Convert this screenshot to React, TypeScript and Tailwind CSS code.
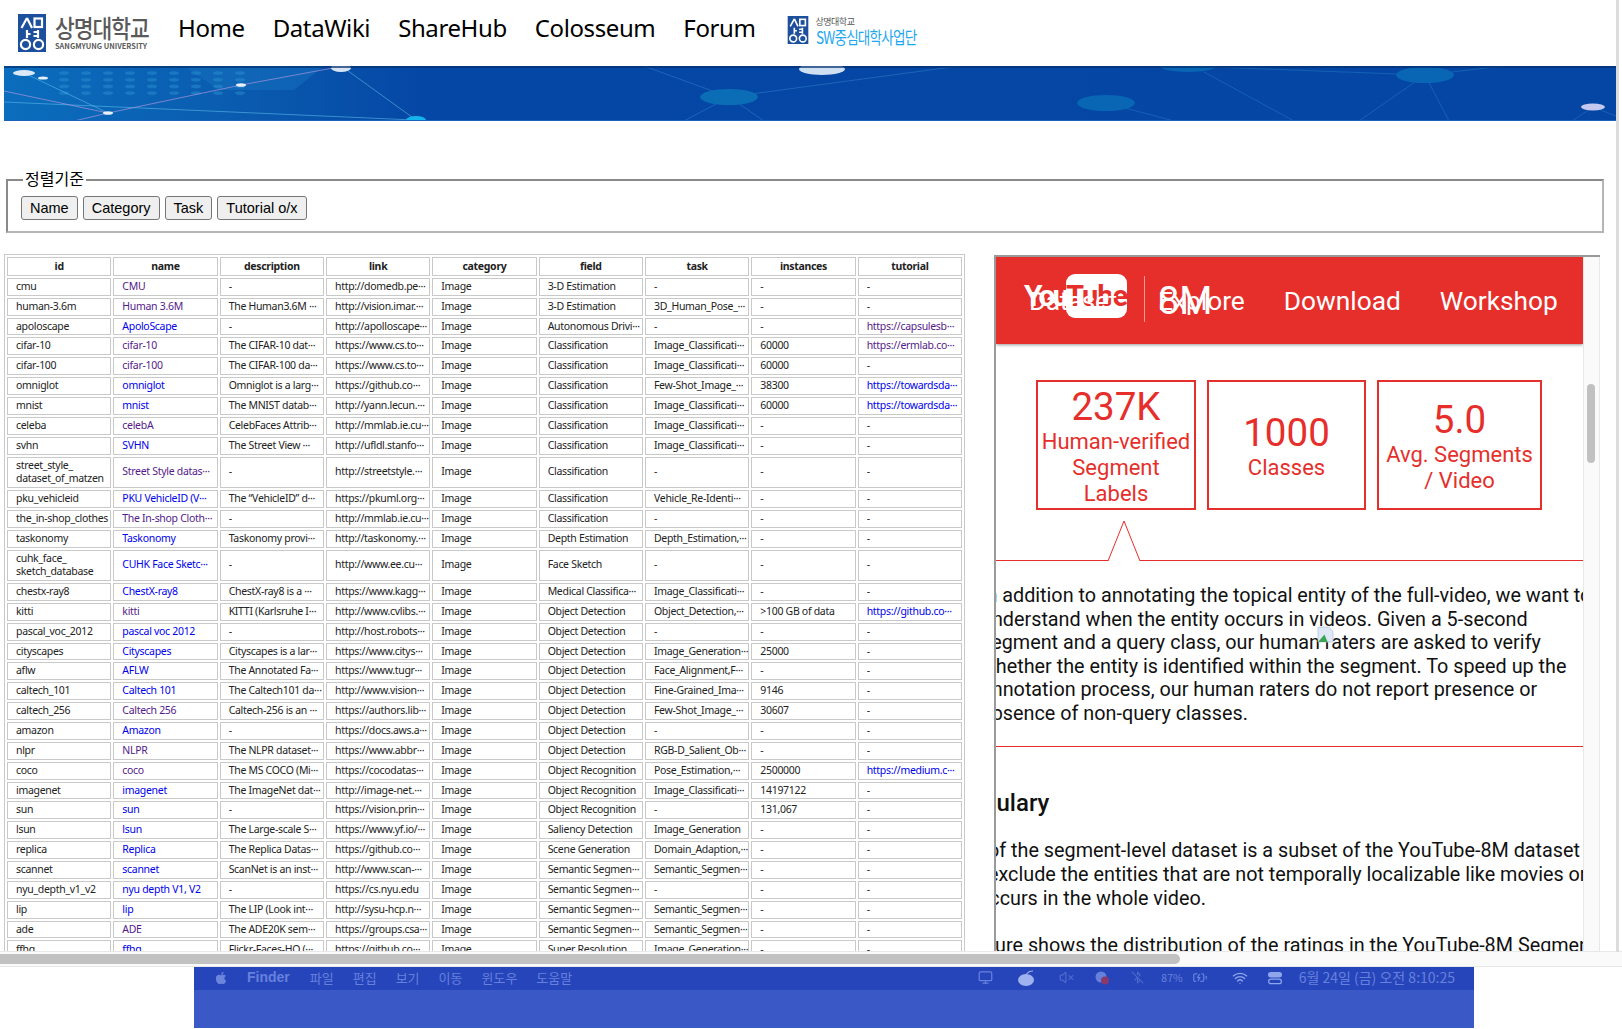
import React from 'react';
import { Monitor, VolumeX, BluetoothOff, Wifi, BatteryCharging } from 'lucide-react';
import { FaApple } from 'react-icons/fa';

// [id, name, visited, description, link, field, task, instances, tutorial, tutorial visited]
type Row = [string, string, boolean, string, string, string, string, string, string, boolean?];

const rows: Row[] = [
  ['cmu', 'CMU', true, '-', 'http://domedb.pe···', '3-D Estimation', '-', '-', '-'],
  ['human-3.6m', 'Human 3.6M', true, 'The Human3.6M ···', 'http://vision.imar.···', '3-D Estimation', '3D_Human_Pose_···', '-', '-'],
  ['apoloscape', 'ApoloScape', false, '-', 'http://apolloscape···', 'Autonomous Drivi···', '-', '-', 'https://capsulesb···', true],
  ['cifar-10', 'cifar-10', true, 'The CIFAR-10 dat···', 'https://www.cs.to···', 'Classification', 'Image_Classificati···', '60000', 'https://ermlab.co···', true],
  ['cifar-100', 'cifar-100', true, 'The CIFAR-100 da···', 'https://www.cs.to···', 'Classification', 'Image_Classificati···', '60000', '-'],
  ['omniglot', 'omniglot', false, 'Omniglot is a larg···', 'https://github.co···', 'Classification', 'Few-Shot_Image_···', '38300', 'https://towardsda···'],
  ['mnist', 'mnist', false, 'The MNIST datab···', 'http://yann.lecun.···', 'Classification', 'Image_Classificati···', '60000', 'https://towardsda···'],
  ['celeba', 'celebA', true, 'CelebFaces Attrib···', 'http://mmlab.ie.cu···', 'Classification', 'Image_Classificati···', '-', '-'],
  ['svhn', 'SVHN', false, 'The Street View ···', 'http://ufldl.stanfo···', 'Classification', 'Image_Classificati···', '-', '-'],
  ['street_style_\ndataset_of_matzen', 'Street Style datas···', true, '-', 'http://streetstyle.···', 'Classification', '-', '-', '-'],
  ['pku_vehicleid', 'PKU VehicleID (V···', false, 'The “VehicleID” d···', 'https://pkuml.org···', 'Classification', 'Vehicle_Re-Identi···', '-', '-'],
  ['the_in-shop_clothes', 'The In-shop Cloth···', true, '-', 'http://mmlab.ie.cu···', 'Classification', '-', '-', '-'],
  ['taskonomy', 'Taskonomy', false, 'Taskonomy provi···', 'http://taskonomy.···', 'Depth Estimation', 'Depth_Estimation,···', '-', '-'],
  ['cuhk_face_\nsketch_database', 'CUHK Face Sketc···', false, '-', 'http://www.ee.cu···', 'Face Sketch', '-', '-', '-'],
  ['chestx-ray8', 'ChestX-ray8', false, 'ChestX-ray8 is a ···', 'https://www.kagg···', 'Medical Classifica···', 'Image_Classificati···', '-', '-'],
  ['kitti', 'kitti', true, 'KITTI (Karlsruhe I···', 'http://www.cvlibs.···', 'Object Detection', 'Object_Detection,···', '>100 GB of data', 'https://github.co···'],
  ['pascal_voc_2012', 'pascal voc 2012', false, '-', 'http://host.robots···', 'Object Detection', '-', '-', '-'],
  ['cityscapes', 'Cityscapes', false, 'Cityscapes is a lar···', 'https://www.citys···', 'Object Detection', 'Image_Generation···', '25000', '-'],
  ['aflw', 'AFLW', false, 'The Annotated Fa···', 'https://www.tugr···', 'Object Detection', 'Face_Alignment,F···', '-', '-'],
  ['caltech_101', 'Caltech 101', false, 'The Caltech101 da···', 'http://www.vision···', 'Object Detection', 'Fine-Grained_Ima···', '9146', '-'],
  ['caltech_256', 'Caltech 256', true, 'Caltech-256 is an ···', 'https://authors.lib···', 'Object Detection', 'Few-Shot_Image_···', '30607', '-'],
  ['amazon', 'Amazon', false, '-', 'https://docs.aws.a···', 'Object Detection', '-', '-', '-'],
  ['nlpr', 'NLPR', true, 'The NLPR dataset···', 'https://www.abbr···', 'Object Detection', 'RGB-D_Salient_Ob···', '-', '-'],
  ['coco', 'coco', true, 'The MS COCO (Mi···', 'https://cocodatas···', 'Object Recognition', 'Pose_Estimation,···', '2500000', 'https://medium.c···'],
  ['imagenet', 'imagenet', false, 'The ImageNet dat···', 'http://image-net.···', 'Object Recognition', 'Image_Classificati···', '14197122', '-'],
  ['sun', 'sun', false, '-', 'https://vision.prin···', 'Object Recognition', '-', '131,067', '-'],
  ['lsun', 'lsun', false, 'The Large-scale S···', 'https://www.yf.io/···', 'Saliency Detection', 'Image_Generation', '-', '-'],
  ['replica', 'Replica', false, 'The Replica Datas···', 'https://github.co···', 'Scene Generation', 'Domain_Adaption,···', '-', '-'],
  ['scannet', 'scannet', false, 'ScanNet is an inst···', 'http://www.scan-···', 'Semantic Segmen···', 'Semantic_Segmen···', '-', '-'],
  ['nyu_depth_v1_v2', 'nyu depth V1, V2', false, '-', 'https://cs.nyu.edu', 'Semantic Segmen···', '-', '-', '-'],
  ['lip', 'lip', false, 'The LIP (Look int···', 'http://sysu-hcp.n···', 'Semantic Segmen···', 'Semantic_Segmen···', '-', '-'],
  ['ade', 'ADE', true, 'The ADE20K sem···', 'https://groups.csa···', 'Semantic Segmen···', 'Semantic_Segmen···', '-', '-'],
  ['ffhq', 'ffhq', false, 'Flickr-Faces-HQ (···', 'https://github.co···', 'Super Resolution', 'Image_Generation···', '-', '-'],
];

const headers = ['id', 'name', 'description', 'link', 'category', 'field', 'task', 'instances', 'tutorial'];

const Td: React.FC<{ children: React.ReactNode; className?: string }> = ({ children, className }) => (
  <td className={`border border-[#c9c9c9] px-[8px] py-[1px] h-[17.86px] leading-[13.7px] whitespace-pre align-middle ${className ?? ''}`}>{children}</td>
);

const Emblem: React.FC<{ className: string }> = ({ className }) => (
  <svg viewBox="0 0 28 38" className={className}>
    <rect width="28" height="38" fill="#1c4f9c" />
    <g fill="none" stroke="#fff" strokeWidth="2.2">
      <path d="M9 4 L3.5 14 M9 4 L14 14" />
      <rect x="16.5" y="4.5" width="7.5" height="8.5" />
      <path d="M9 16 V24 M9 20 H12.5 M20 16 V24 M15.5 18 H20 M15.5 22 H20" />
      <circle cx="7.5" cy="30.5" r="4.6" />
      <circle cx="20.5" cy="30.5" r="4.6" />
    </g>
  </svg>
);

const Banner = () => (
  <svg viewBox="0 0 1612 55" preserveAspectRatio="none" className="block w-full h-full">
    <defs>
      <linearGradient id="bannerFade" x1="0" x2="1" y1="0" y2="0">
        <stop offset="0" stopColor="#0b6dbd" />
        <stop offset="0.14" stopColor="#0a5cb0" />
        <stop offset="0.26" stopColor="#0547a5" />
        <stop offset="1" stopColor="#0546a4" />
      </linearGradient>
    </defs>
    <rect width="1612" height="55" fill="url(#bannerFade)" />
    <path d="M180 0 L320 0 L290 24 L215 24 Z" fill="#1670bd" opacity="0.55" />
    <g fill="#2a8fd0" opacity="0.5">
      {[0, 1, 2, 3].map(r =>
        [60, 82, 104, 126, 148, 170, 192, 214, 236].map(x => (
          <ellipse key={`${r}-${x}`} cx={x} cy={7 + r * 6.7} rx="5" ry="1.8" />
        )),
      )}
    </g>
    <g stroke="#5fc0ee" strokeWidth="0.8" fill="none" opacity="0.7">
      <path d="M20 7 L104 47 M0 36 L410 54" />
      <path d="M340 2 L412 54" />
      <path d="M725 31 L680 55 M725 31 L760 55 M725 31 L640 0 M725 31 L1000 -6" stroke="#2f7ec8" />
    </g>
    <g stroke="#1561b4" strokeWidth="1" fill="none">
      <path d="M1200 6 L1290 55 M1421 9 L1355 55 M1421 9 L1445 55 M1421 9 L1180 0 M1421 9 L1500 0 M1102 37 L1170 55 M1589 41 L1568 55 M1589 41 L1612 50" />
    </g>
    <g stroke="#b79be0" strokeWidth="0.8" fill="none" opacity="0.8">
      <path d="M70 55 L104 47 L237 19 L340 0" />
      <path d="M0 25 L104 47" />
    </g>
    <ellipse cx="725" cy="31" rx="29" ry="8" fill="#0b6db6" />
    <ellipse cx="1102" cy="37" rx="29" ry="8" fill="#0866b4" />
    <ellipse cx="1421" cy="9" rx="29" ry="8" fill="#0866b4" />
    <ellipse cx="1184" cy="0" rx="28" ry="6" fill="#0866b4" />
    <ellipse cx="818" cy="3" rx="23" ry="6" fill="#cfe0f3" />
    <ellipse cx="337" cy="2" rx="10" ry="4" fill="#d6e4f4" />
    <ellipse cx="20" cy="7" rx="11" ry="3" fill="#dbe9f6" />
    <ellipse cx="39" cy="12" rx="5" ry="1.6" fill="#e8f1fa" />
    <ellipse cx="104" cy="47" rx="5" ry="1.8" fill="#e8f1fa" />
    <ellipse cx="237" cy="19" rx="5" ry="1.8" fill="#e8f1fa" />
    <ellipse cx="412" cy="54" rx="10" ry="4" fill="#14b4ee" />
    <ellipse cx="1589" cy="41" rx="12" ry="3.5" fill="#c5c9f0" />
    <rect y="0" width="1612" height="2" fill="#04306f" opacity="0.7" />
    <rect y="54" width="1612" height="1" fill="#1a63b8" />
  </svg>
);

const Stat: React.FC<{ value: string; lines: string[]; className: string }> = ({ value, lines, className }) => (
  <div className={`border-2 border-[#e62f2b] h-[130px] flex flex-col items-center justify-center text-[#e62f2b] ${className}`}>
    <div className="text-[38.5px] leading-[48px] -mb-[2px]">{value}</div>
    {lines.map(l => (
      <div key={l} className="text-[22px] leading-[26px] whitespace-nowrap">{l}</div>
    ))}
  </div>
);

export default function App() {
  return (
    <div className="relative w-[1622px] h-[1029px] overflow-hidden bg-white font-['Roboto',sans-serif] text-black">
      {/* site nav */}
      <header className="h-[66px] flex items-center pl-[18px]">
        <Emblem className="w-[28px] h-[38px]" />
        <div className="ml-[9px] w-[96px] font-['Noto_Sans_CJK_KR',sans-serif] text-[#5a5a5a] mb-[3px]">
          <div className="text-[25px] leading-[29px] font-medium tracking-[-1.2px] whitespace-nowrap origin-left scale-x-[0.86]">상명대학교</div>
          <div className="text-[7.4px] leading-[8px] font-bold whitespace-nowrap">SANGMYUNG UNIVERSITY</div>
        </div>
        <nav className="ml-[27px] mb-[10px] flex gap-[28px] text-[24px] leading-none font-['Noto_Sans',sans-serif] tracking-[-0.4px]">
          {['Home', 'DataWiki', 'ShareHub', 'Colosseum', 'Forum'].map(n => (
            <span key={n}>{n}</span>
          ))}
        </nav>
        <Emblem className="ml-[31px] w-[22px] h-[28px] mb-[6px]" />
        <div className="ml-[7px] font-['Noto_Sans_CJK_KR',sans-serif] mb-[4px]">
          <div className="text-[9px] leading-[12px] text-[#555] tracking-[-0.5px]">상명대학교</div>
          <div className="text-[17px] leading-[18px] text-[#1ea6ef] tracking-[-1px] whitespace-nowrap origin-left scale-x-[0.8]">SW중심대학사업단</div>
        </div>
      </header>

      <div className="ml-[4px] w-[1612px] h-[55px]">
        <Banner />
      </div>

      <fieldset className="ml-[6px] mt-[47px] w-[1598px] h-[65px] border-2 border-[#8a8a8a] border-b-[#b5b5b5] border-r-[#b5b5b5] pl-[13px] pt-[4px]">
        <legend className="ml-[2px] px-[2px] pb-[4px] text-[16px] leading-[20px] font-['Noto_Sans_CJK_KR',sans-serif]">정렬기준</legend>
        <div className="flex gap-[5px] font-['Liberation_Sans',sans-serif] text-[14.5px]">
          {['Name', 'Category', 'Task', 'Tutorial o/x'].map(b => (
            <button key={b} className="h-[24px] px-[8px] bg-[#efefef] border border-[#767676] rounded-[3px] leading-none">{b}</button>
          ))}
        </div>
      </fieldset>

      <div className="flex h-[719px] mt-[-1px] items-stretch">
        {/* dataset table */}
        <div className="w-[994px] shrink-0 pl-[4px] pt-[22px] overflow-hidden">
          <table className="w-[961px] table-fixed border-separate border-spacing-[2px] border border-[#c9c9c9] text-[10.5px] tracking-[-0.3px] text-[#222] font-['Noto_Sans',sans-serif]">
            <thead>
              <tr>
                {headers.map(h => (
                  <th key={h} className="border border-[#c9c9c9] h-[18.83px] p-0 font-bold text-center">{h}</th>
                ))}
              </tr>
            </thead>
            <tbody>
              {rows.map(r => (
                <tr key={r[0]}>
                  <Td>{r[0]}</Td>
                  <Td className={r[2] ? 'text-[#551a8b]' : 'text-[#0000ee]'}>{r[1]}</Td>
                  <Td>{r[3]}</Td>
                  <Td>{r[4]}</Td>
                  <Td>Image</Td>
                  <Td>{r[5]}</Td>
                  <Td>{r[6]}</Td>
                  <Td>{r[7]}</Td>
                  <Td className={r[8] === '-' ? '' : r[9] ? 'text-[#551a8b]' : 'text-[#0000ee]'}>{r[8]}</Td>
                </tr>
              ))}
            </tbody>
          </table>
        </div>

        {/* embedded YouTube-8M page, scrolled sideways */}
        <div className="mt-[23px] w-[606px] flex border-l-2 border-t-2 border-[#9a9a9a] overflow-hidden">
          <div className="relative w-[587px] overflow-hidden shrink-0">
            <div className="relative h-[87px] bg-[#e62f2b] shadow-[0_1px_3px_rgba(0,0,0,0.4)] text-white flex items-center text-[26.3px]">
              <div className="absolute left-[28px] top-[16px] flex items-center">
                <span className="w-[42px] text-[30px] font-bold tracking-[-3px]">You</span>
                <span className="w-[61px] h-[44px] bg-white rounded-[9px] text-[#e62f2b] text-[29px] font-bold tracking-[-1px] text-center leading-[44px]">Tube</span>
              </div>
              <span className="absolute left-[33px] top-[29px] leading-[30px] tracking-[-0.4px]">Dataset</span>
              <span className="absolute left-[148px] top-[19px] w-px h-[46px] bg-white/50" />
              <span className="absolute left-[162px] top-[24px] text-[38px] leading-[40px]">8M</span>
              <div className="ml-[162px] flex gap-[39px] leading-[30px] mt-[1px]">
                <span>Explore</span>
                <span>Download</span>
                <span>Workshop</span>
              </div>
            </div>

            <div className="flex ml-[40px] mt-[36px] gap-[11px]">
              <Stat value="237K" lines={['Human-verified', 'Segment', 'Labels']} className="w-[160px]" />
              <Stat value="1000" lines={['Classes']} className="w-[159px]" />
              <Stat value="5.0" lines={['Avg. Segments', '/ Video']} className="w-[165px]" />
            </div>

            <div className="relative mt-[50px] border-t border-[#e62f2b]">
              <svg viewBox="0 0 32 40" className="absolute left-[112px] top-[-40px] w-[32px] h-[40px]">
                <path d="M0 40 L16 0 L32 40" fill="#fff" stroke="#e62f2b" strokeWidth="1" />
              </svg>
            </div>

            <div className="relative -ml-[15px] mt-[23px] text-[19.8px] leading-[23.6px] whitespace-nowrap text-[#111]">
              <div>In addition to annotating the topical entity of the full-video, we want to</div>
              <div>understand when the entity occurs in videos. Given a 5-second</div>
              <div>segment and a query class, our human raters are asked to verify</div>
              <div>whether the entity is identified within the segment. To speed up the</div>
              <div>annotation process, our human raters do not report presence or</div>
              <div>absence of non-query classes.</div>
              {/* broken image marker */}
              <svg viewBox="0 0 16 16" className="absolute left-[336px] top-[42px] w-[17px] h-[17px]">
                <path d="M1 1 H11 L15 5 V15 H1 Z" fill="#dfe8f6" stroke="#b9c6dc" strokeWidth="0.8" />
                <path d="M1 15 L7 8 L10 15 Z" fill="#3aa655" />
              </svg>
            </div>

            <div className="mt-[20px] border-t border-[#e62f2b]" />

            <div className="-ml-[67px] mt-[41px] text-[24px] leading-[30px] font-medium whitespace-nowrap text-[#111]">Vocabulary</div>

            <div className="-ml-[8px] mt-[21px] text-[19.8px] leading-[24px] whitespace-nowrap text-[#111]">
              <div>of the segment-level dataset is a subset of the YouTube-8M dataset</div>
              <div>exclude the entities that are not temporally localizable like movies or</div>
              <div className="-ml-[10px]">occurs in the whole video.</div>
            </div>
            <div className="-ml-[23px] mt-[23px] text-[19.8px] leading-[23.6px] whitespace-nowrap text-[#111]">
              figure shows the distribution of the ratings in the YouTube-8M Segments
            </div>
          </div>

          {/* inner scrollbar */}
          <div className="relative w-[17px] shrink-0 bg-[#fafafa] border-x border-[#e8e8e8]">
            <div className="absolute left-[3px] top-[127px] w-[8px] h-[79px] rounded-full bg-[#c1c1c1]" />
          </div>
        </div>
      </div>

      {/* window scrollbars */}
      <div className="h-[16px] bg-[#fafafa] border-y border-[#e8e8e8] py-[2px]">
        <div className="w-[1180px] h-[10px] rounded-r-full bg-[#c1c1c1]" />
      </div>
      <div className="absolute right-[3px] top-0 w-[3px] h-[952px] bg-[#dcdcdc]" />

      {/* pasted macOS desktop */}
      <div className="ml-[194px] w-[1280px] h-[61px] bg-[#3a58c6] font-['Noto_Sans_CJK_KR',sans-serif] text-[13px] text-[#6681dd]">
        <div className="h-[23px] bg-[#2745ba] flex items-center pl-[20px] pr-[19px] pb-[2px]">
          <FaApple className="w-[14px] h-[14px] text-[#6c86de]" />
          <span className="ml-[19px] font-bold text-[14px] font-['Liberation_Sans',sans-serif]">Finder</span>
          <div className="ml-[20px] flex gap-[19px]">
            {['파일', '편집', '보기', '이동', '윈도우', '도움말'].map(m => (
              <span key={m}>{m}</span>
            ))}
          </div>
          <div className="ml-auto flex items-center">
            <Monitor className="w-[15px] h-[15px]" />
            {/* tangerine menu bar app */}
            <svg viewBox="0 0 18 16" className="ml-[24px] w-[18px] h-[16px]">
              <ellipse cx="9" cy="10" rx="8" ry="6" fill="#9db2ee" />
              <path d="M9 5 Q11 1 16 1" stroke="#9db2ee" strokeWidth="1.2" fill="none" />
            </svg>
            <VolumeX className="ml-[24px] w-[15px] h-[15px] text-[#4d69cc]" />
            {/* notification bubble with badge */}
            <svg viewBox="0 0 14 14" className="ml-[21px] w-[14px] h-[14px]">
              <circle cx="6" cy="6" r="5.5" fill="#6681dd" />
              <circle cx="10" cy="9.5" r="4" fill="#8a3a6a" />
            </svg>
            <BluetoothOff className="ml-[22px] w-[13px] h-[13px] text-[#4d69cc]" />
            <span className="ml-[17px] text-[10.5px]">87%</span>
            <BatteryCharging className="ml-[5px] w-[24px] h-[15px]" />
            <Wifi className="ml-[20px] w-[16px] h-[16px] text-[#8fa6ea]" />
            {/* control center pills */}
            <svg viewBox="0 0 16 16" className="ml-[19px] w-[16px] h-[16px]">
              <rect x="1" y="2" width="14" height="5.5" rx="2.75" fill="#8fa6ea" />
              <rect x="1.6" y="9.1" width="12.8" height="4.6" rx="2.3" fill="none" stroke="#8fa6ea" strokeWidth="1.2" />
            </svg>
            <span className="ml-[16px] text-[14px] whitespace-nowrap">6월 24일 (금) 오전 8:10:25</span>
          </div>
        </div>
      </div>
    </div>
  );
}
